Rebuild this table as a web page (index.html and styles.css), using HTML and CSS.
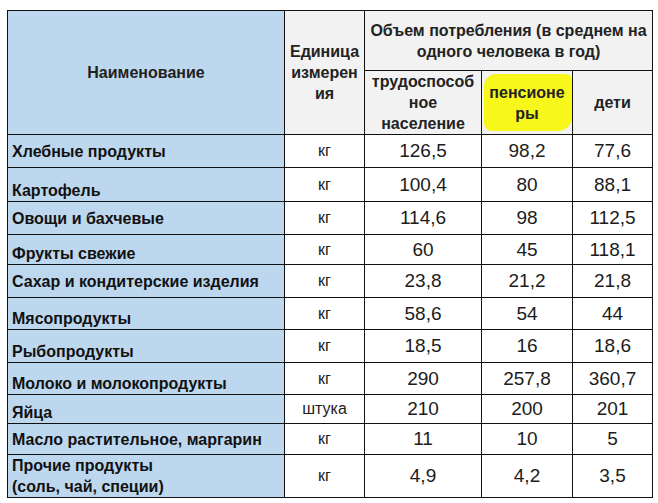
FILE: index.html
```html
<!DOCTYPE html>
<html lang="ru">
<head>
<meta charset="utf-8">
<link rel="stylesheet" href="styles.css">
</head>
<body>
<table class="tbl">
  <colgroup>
    <col class="c-name"><col class="c-unit"><col class="c-a"><col class="c-b"><col class="c-c">
  </colgroup>
  <thead>
    <tr class="h1">
      <th rowspan="2" class="name-h">Наименование</th>
      <th rowspan="2" class="gray">Единица измерен ия</th>
      <th colspan="3" class="gray">Объем потребления (в среднем на одного человека в год)</th>
    </tr>
    <tr class="h2">
      <th class="gray">трудоспособ ное население</th>
      <th class="gray hl"><span class="hl-mark"></span><span class="hl-text">пенсионе ры</span></th>
      <th class="gray">дети</th>
    </tr>
  </thead>
  <tbody>
    <tr class="r33"><td class="name">Хлебные продукты</td><td class="unit">кг</td><td>126,5</td><td>98,2</td><td>77,6</td></tr>
    <tr class="r34"><td class="name bot">Картофель</td><td class="unit">кг</td><td>100,4</td><td>80</td><td>88,1</td></tr>
    <tr class="r33"><td class="name">Овощи и бахчевые</td><td class="unit">кг</td><td>114,6</td><td>98</td><td>112,5</td></tr>
    <tr class="r30"><td class="name bot">Фрукты свежие</td><td class="unit">кг</td><td>60</td><td>45</td><td>118,1</td></tr>
    <tr class="r33"><td class="name">Сахар и кондитерские изделия</td><td class="unit">кг</td><td>23,8</td><td>21,2</td><td>21,8</td></tr>
    <tr class="r32"><td class="name bot">Мясопродукты</td><td class="unit">кг</td><td>58,6</td><td>54</td><td>44</td></tr>
    <tr class="r33"><td class="name bot">Рыбопродукты</td><td class="unit">кг</td><td>18,5</td><td>16</td><td>18,6</td></tr>
    <tr class="r32"><td class="name bot">Молоко и молокопродукты</td><td class="unit">кг</td><td>290</td><td>257,8</td><td>360,7</td></tr>
    <tr class="r29"><td class="name bot">Яйца</td><td class="unit">штука</td><td>210</td><td>200</td><td>201</td></tr>
    <tr class="r31"><td class="name">Масло растительное, маргарин</td><td class="unit">кг</td><td>11</td><td>10</td><td>5</td></tr>
    <tr class="r43"><td class="name">Прочие продукты<br>(соль, чай, специи)</td><td class="unit">кг</td><td>4,9</td><td>4,2</td><td>3,5</td></tr>
  </tbody>
</table>
</body>
</html>
```
FILE: styles.css
```css
html, body {
  margin: 0;
  padding: 0;
  background: #ffffff;
}
body {
  padding: 10px 0 0 7px;
  font-family: "Liberation Sans", Arial, sans-serif;
  color: #1a1a1a;
}
.tbl {
  border-collapse: collapse;
  table-layout: fixed;
  width: 645px;
}
.c-name { width: 277px; }
.c-unit { width: 80px; }
.c-a { width: 117px; }
.c-b { width: 91px; }
.c-c { width: 80px; }

.tbl th, .tbl td {
  border: 1.5px solid #111;
  padding: 0 3px;
  overflow: hidden;
}
.tbl th {
  font-weight: bold;
  font-size: 16px;
  line-height: 21px;
  text-align: center;
  vertical-align: middle;
  color: #222;
}
.h1 { height: 60px; }
.h2 { height: 63px; }
.name-h { background: #bdd7ee; }
.gray { background: #f2f2f2; }
.hl { position: relative; }
.hl-mark {
  position: absolute;
  left: 2px;
  right: 0;
  top: 3px;
  bottom: 3px;
  background: #f7f71c;
  border-radius: 12px 6px 14px 8px;
}
.hl-text {
  position: relative;
}

.tbl td {
  font-size: 19px;
  text-align: center;
  vertical-align: middle;
  background: #fff;
  color: #1c1c1c;
}
.tbl td.name {
  background: #bdd7ee;
  text-align: left;
  font-weight: bold;
  font-size: 16px;
  line-height: 21px;
  padding: 0 4px;
  color: #111;
}
.tbl td.bot {
  vertical-align: bottom;
  padding-bottom: 0;
}
.tbl td.unit {
  font-size: 16px;
}
.r29 { height: 29px; }
.r30 { height: 30px; }
.r31 { height: 31px; }
.r32 { height: 32px; }
.r33 { height: 33px; }
.r34 { height: 34px; }
.r43 { height: 43px; }
```
